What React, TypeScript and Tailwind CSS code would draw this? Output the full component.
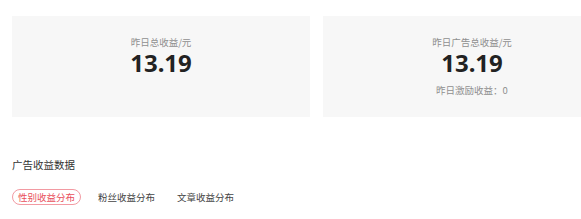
import React from "react";

const cjk = { fontFamily: '"Noto Sans CJK SC", "Noto Sans", sans-serif' };
const num = { fontFamily: '"Noto Sans", "Open Sans", sans-serif' };

export default function App() {
  return (
    <div className="w-[581px] h-[219px] overflow-hidden bg-white" style={cjk}>
      <div className="flex gap-[13px] pt-4 pl-3">
        <div className="w-[298px] h-[101px] shrink-0 bg-[#f7f7f7] flex flex-col items-center pt-[21px]">
          <div className="text-[9.5px] leading-[11px] text-[#8f8f8f]">昨日总收益/元</div>
          <div className="text-[24px] leading-[30px] font-bold text-[#222]" style={num}>13.19</div>
        </div>
        <div className="w-[298px] h-[101px] shrink-0 bg-[#f7f7f7] flex flex-col items-center pt-[21px]">
          <div className="text-[9.5px] leading-[11px] text-[#8f8f8f]">昨日广告总收益/元</div>
          <div className="text-[24px] leading-[30px] font-bold text-[#222]" style={num}>13.19</div>
          <div className="mt-[6px] text-[9.5px] leading-[13px] text-[#8f8f8f]">昨日激励收益：0</div>
        </div>
      </div>
      <div className="pl-3 mt-[40px] text-[10.5px] leading-[16px] text-[#333]">广告收益数据</div>
      <div className="pl-3 mt-[16px] flex items-center gap-[12px] text-[9.5px]">
        <div className="h-[16px] px-[5px] flex items-center rounded-full border border-[#f29aa2] text-[#e9505c]">性别收益分布</div>
        <div className="h-[16px] px-[5px] flex items-center text-[#444]">粉丝收益分布</div>
        <div className="h-[16px] px-[5px] flex items-center text-[#444]">文章收益分布</div>
      </div>
    </div>
  );
}
